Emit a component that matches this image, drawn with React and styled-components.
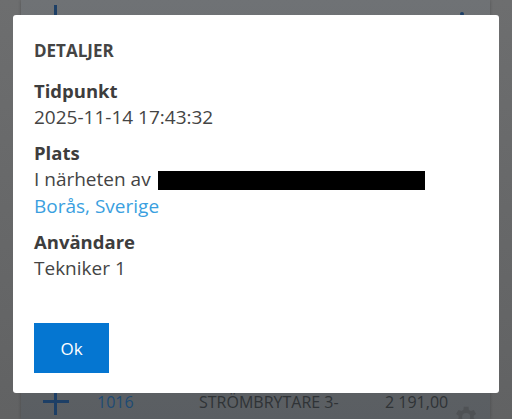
import React from 'react'
import styled, { createGlobalStyle } from 'styled-components'

const Global = createGlobalStyle`
  html, body { margin: 0; padding: 0; }
  body {
    width: 512px;
    height: 419px;
    overflow: hidden;
    font-family: "Open Sans", "Noto Sans", sans-serif;
    background: #686969;
  }
`

export default function App() {
  return (
    <Screen>
      <Global />
      <Panel>
        <Row top>
          <Plus />
          <Num muted>Nr/fil</Num>
          <Name />
          <Amount />
          <Dot />
        </Row>
        <Row>
          <Plus />
          <Num>1016</Num>
          <Name>STRÖMBRYTARE 3-</Name>
          <Amount>2 191,00</Amount>
          <Gear viewBox="0 0 24 24">
            <path d="M19.4 13a7.5 7.5 0 0 0 0-2l2.1-1.6-2-3.5-2.5 1a7.6 7.6 0 0 0-1.7-1L15 3.2h-4l-.4 2.7a7.6 7.6 0 0 0-1.7 1l-2.5-1-2 3.5L6.6 11a7.5 7.5 0 0 0 0 2l-2.1 1.6 2 3.5 2.5-1a7.6 7.6 0 0 0 1.7 1l.4 2.7h4l.4-2.7a7.6 7.6 0 0 0 1.7-1l2.5 1 2-3.5zM13 15.5a3.5 3.5 0 1 1 0-7 3.5 3.5 0 0 1 0 7z" />
          </Gear>
        </Row>
      </Panel>

      <Dialog>
        <Title>DETALJER</Title>
        <Group>
          <Label>Tidpunkt</Label>
          <Value>2025-11-14 17:43:32</Value>
        </Group>
        <Group>
          <Label>Plats</Label>
          <Value>I närheten av <Redacted /></Value>
          <Link>Borås, Sverige</Link>
        </Group>
        <Group>
          <Label>Användare</Label>
          <Value>Tekniker 1</Value>
        </Group>
        <Footer>
          <OkButton>Ok</OkButton>
        </Footer>
      </Dialog>
    </Screen>
  )
}

const Screen = styled.div`
  position: relative;
  width: 512px;
  height: 419px;
  overflow: hidden;
  display: flex;
  justify-content: center;
  background: linear-gradient(#6d6e6f, #616263);
`

const Panel = styled.div`
  width: 469px;
  margin-left: -1px;
  height: 419px;
  display: flex;
  flex-direction: column;
  justify-content: space-between;
  background: linear-gradient(#6f7275, #5a5e62);
  box-shadow: 0 0 3px rgba(0,0,0,0.25);
`

const Row = styled.div`
  display: flex;
  align-items: center;
  height: 40px;
  padding-left: 22px;
  margin-top: ${p => p.top ? '-2px' : '0'};
  margin-bottom: ${p => p.top ? '0' : '-3px'};
  font-size: 16px;
  color: #2f3336;
`

const Plus = styled.div`
  position: relative;
  width: 26px;
  height: 26px;
  flex: none;
  &::before, &::after {
    content: '';
    position: absolute;
    background: #1d3f66;
  }
  &::before { left: 0; right: 0; top: 11px; height: 3px; }
  &::after { top: 0; bottom: 0; left: 11px; width: 3px; }
`

const Num = styled.span`
  width: 102px;
  padding-left: 28px;
  margin-top: ${p => p.muted ? '9px' : '0'};
  color: ${p => p.muted ? '#2f3336' : '#1e4b74'};
`

const Name = styled.span`
  width: 186px;
`

const Amount = styled.span`
  width: 66px;
`

const Dot = styled.span`
  width: 4px;
  height: 4px;
  margin-left: 9px;
  margin-bottom: 8px;
  border-radius: 50%;
  background: #1d3f66;
`

const Gear = styled.svg`
  width: 28px;
  height: 28px;
  margin-top: 30px;
  fill: #4f5255;
`

const Dialog = styled.div`
  position: absolute;
  left: 13px;
  top: 15px;
  width: 486px;
  height: 378px;
  box-sizing: border-box;
  padding: 24px 21px 20px;
  background: #fff;
  border-radius: 3px;
  display: flex;
  flex-direction: column;
  color: #424242;
`

const Title = styled.h2`
  margin: 0 0 14px;
  font-size: 17px;
  line-height: 24px;
  font-weight: 700;
  color: #444;
`

const Group = styled.div`
  & + & { margin-top: 8px; }
`

const Label = styled.div`
  font-size: 18.5px;
  line-height: 27px;
  font-weight: 700;
  color: #3d3d3d;
`

const Value = styled.div`
  font-size: 19px;
  line-height: 27px;
  color: #444;
`

const Link = styled.div`
  font-size: 19px;
  line-height: 27px;
  color: #3a9fe0;
`

const Redacted = styled.span`
  display: inline-block;
  width: 267px;
  height: 19px;
  vertical-align: -4px;
  margin-left: 2px;
  background: #000;
`

const Footer = styled.div`
  margin-top: auto;
`

const OkButton = styled.button`
  width: 75px;
  height: 50px;
  border: none;
  border-radius: 0;
  background: #0576d1;
  color: #fff;
  font-family: "Open Sans", sans-serif;
  font-size: 17px;
`
